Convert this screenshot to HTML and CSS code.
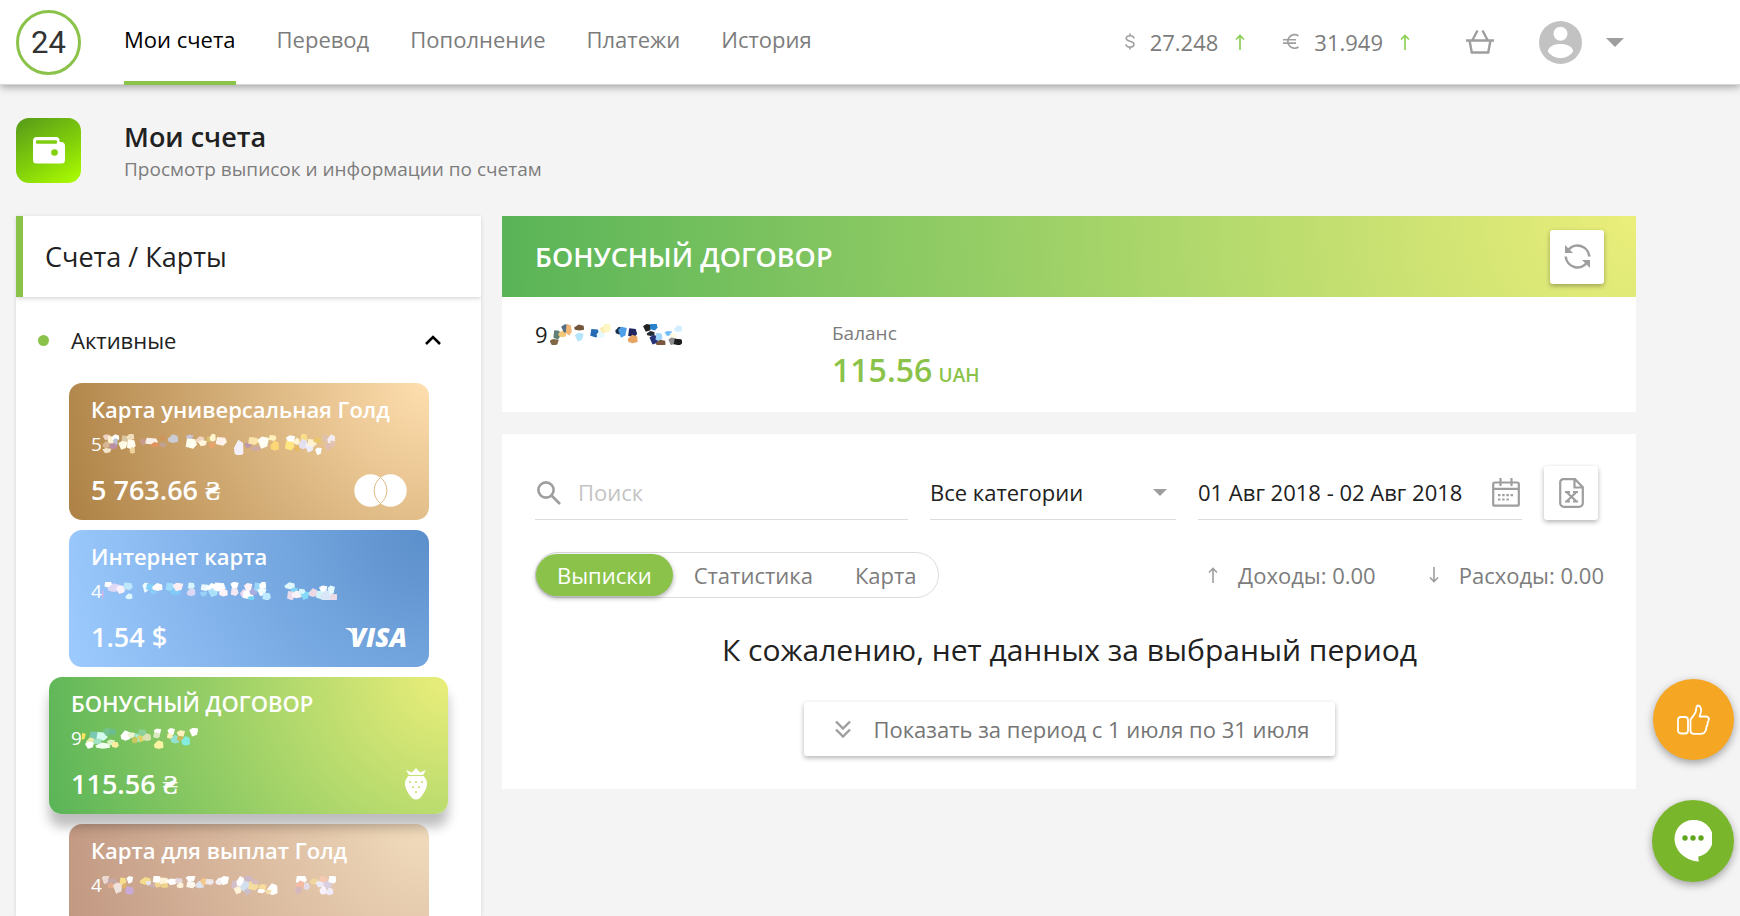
FILE: index.html
```html
<!DOCTYPE html>
<html lang="ru">
<head>
<meta charset="utf-8">
<title>Мои счета</title>
<link rel="stylesheet" href="styles.css">
</head>
<body>
<header class="topbar">
  <a class="logo" href="#">24</a>
  <nav class="nav">
    <a class="nav-link active" href="#">Мои счета</a>
    <a class="nav-link" href="#">Перевод</a>
    <a class="nav-link" href="#">Пополнение</a>
    <a class="nav-link" href="#">Платежи</a>
    <a class="nav-link" href="#">История</a>
  </nav>
  <div class="rates">
    <div class="rate">
      <svg class="cur usd" viewBox="0 0 10 17"><path d="M9 5.6C9 3.8 7.4 2.8 5 2.8S1.200 3.900 1.200 5.500C1.200 9 9 7.400 9 11.300c0 1.700-1.600 2.800-4 2.800S1 13 1 11.200M5 .5v2.300M5 14v2.500"/></svg>
      <span>27.248</span>
      <svg class="arrow up" viewBox="0 0 10 16"><path d="M5 16V1.500M1 5.500l4-4 4 4"/></svg>
    </div>
    <div class="rate">
      <svg class="cur eur" viewBox="0 0 16 17"><path d="M15.500 2.800A6.800 6.800 0 1 0 15.500 14M0 6.700h13M0 10.100h13"/></svg>
      <span>31.949</span>
      <svg class="arrow up" viewBox="0 0 10 16"><path d="M5 16V1.500M1 5.500l4-4 4 4"/></svg>
    </div>
  </div>
  <button class="bare" aria-label="Корзина">
    <svg class="basket" viewBox="0 0 28 24"><path d="M0 10.500h28M3.500 10.500l2.300 12h16.400l2.300-12M6.500 10l5-9.500M21.500 10l-5-9.500"/></svg>
  </button>
  <button class="bare profile" aria-label="Профиль">
    <svg class="avatar" viewBox="0 0 43 43"><circle cx="21.500" cy="21.500" r="21.500" fill="#c2c2c2"/><circle cx="21.500" cy="12.700" r="7" fill="#fff"/><path d="M9 30.500c0-5 6-7.500 12.500-7.500S34 25.500 34 30.500C31.500 34.500 27 37 21.500 37S11.500 34.500 9 30.500z" fill="#fff"/></svg>
    <svg class="caret" viewBox="0 0 18 9"><path d="M0 0h18L9 9z"/></svg>
  </button>
</header>

<main class="page">
  <section class="intro">
    <div class="intro-icon">
      <svg viewBox="0 0 32 27"><path fill="#fff" d="M4 0h19q3.500 0 3.500 3.500V5H28q4 0 4 4v14q0 3.500-3.500 3.500h-25Q0 26.500 0 23V4Q0 0 4 0z"/><rect x="3" y="3.300" width="21" height="3.500" rx="1" fill="#80cc0f"/><circle cx="21.500" cy="15.500" r="3.300" fill="#80d00a"/></svg>
    </div>
    <div>
      <h1>Мои счета</h1>
      <p>Просмотр выписок и информации по счетам</p>
    </div>
  </section>

  <div class="columns">
    <aside class="sidebar">
      <h2>Счета / Карты</h2>
      <button class="group"><i class="dot"></i><span>Активные</span>
        <svg class="chevron" viewBox="0 0 16 10"><path d="M1 9l7-7 7 7"/></svg>
      </button>
      <div class="cards">
        <article class="card gold">
          <h3>Карта универсальная Голд</h3>
          <div class="number">5<svg class="mosaic" data-set="gold"></svg></div>
          <div class="bottom"><span>5 763.66 <b class="hrn">₴</b></span>
            <svg class="rings" viewBox="0 0 53 33"><circle cx="16.500" cy="16.500" r="16.200"/><circle cx="36.500" cy="16.500" r="16.200"/><path d="M26.500 3.500a16.500 16.500 0 0 1 0 26 16.500 16.500 0 0 1 0-26z"/></svg>
          </div>
        </article>
        <article class="card blue">
          <h3>Интернет карта</h3>
          <div class="number">4<svg class="mosaic" data-set="blue"></svg></div>
          <div class="bottom"><span>1.54 $</span><span class="visa">VISA</span></div>
        </article>
        <article class="card bonus selected">
          <h3>БОНУСНЫЙ ДОГОВОР</h3>
          <div class="number">9<svg class="mosaic" data-set="bonus"></svg></div>
          <div class="bottom"><span>115.56 <b class="hrn">₴</b></span>
            <svg class="berry" viewBox="0 0 22 32"><path fill="#fff" d="M1 2l6 2.500L11 0l4 4.500L21 2l-3 5H4zM3.500 8h15Q22 11 22 16c0 5-4 10-6 13q-2 2.500-5 2.500T6 29C4 26 0 21 0 16Q0 11 3.500 8z"/><g fill="#bfdc6e"><circle cx="5" cy="14" r="1"/><circle cx="11" cy="14" r="1"/><circle cx="17" cy="14" r="1"/><circle cx="8" cy="19" r="1"/><circle cx="14" cy="19" r="1"/><circle cx="11" cy="24" r="1"/></g></svg>
          </div>
        </article>
        <article class="card tan">
          <h3>Карта для выплат Голд</h3>
          <div class="number">4<svg class="mosaic" data-set="tan"></svg></div>
          <div class="bottom"></div>
        </article>
      </div>
    </aside>

    <div class="content">
      <section class="account">
        <div class="account-head">
          <h2>БОНУСНЫЙ ДОГОВОР</h2>
          <button class="square" aria-label="Обновить">
            <svg class="refresh" viewBox="0 0 27 27"><path fill="none" stroke="#9e9e9e" stroke-width="2.600" d="M4 7.500A11.800 11.800 0 0 1 25.300 13.500M1.700 13.500A11.800 11.800 0 0 0 23 19.500"/><path fill="#9e9e9e" d="M1 2v8h8zM26 25v-8h-8z"/></svg>
          </button>
        </div>
        <div class="account-body">
          <div class="acc-number">9<svg class="mosaic" data-set="main"></svg></div>
          <div class="balance">
            <div class="label">Баланс</div>
            <div class="sum">115.56 <small>UAH</small></div>
          </div>
        </div>
      </section>

      <section class="panel">
        <form class="filters">
          <label class="field search">
            <svg viewBox="0 0 24 24"><circle cx="9" cy="9" r="7.600"/><path d="M14.500 14.500l8.500 8.500"/></svg>
            <input type="text" placeholder="Поиск" aria-label="Поиск">
          </label>
          <label class="field category">
            <select aria-label="Категория"><option>Все категории</option></select>
            <svg class="caret" viewBox="0 0 14 7"><path d="M0 0h14L7 7z"/></svg>
          </label>
          <label class="field dates">
            <input type="text" value="01 Авг 2018 - 02 Авг 2018" aria-label="Период">
            <svg viewBox="0 0 28 29"><rect x="1.200" y="4.500" width="25.600" height="23.200" rx="1.500"/><path d="M1 10.800h26M8.500 0v8M19.500 0v8"/><path stroke-dasharray="2.400 1.800" d="M6 17.200h16.500M6 21.500h12"/></svg>
          </label>
          <button class="square" type="button" aria-label="Экспорт в Excel">
            <svg class="xls" viewBox="0 0 25 30"><path d="M4 1.200h12l7.800 8V25a3.800 3.800 0 0 1-3.800 3.800H5A3.800 3.800 0 0 1 1.200 25V4.500A3.300 3.300 0 0 1 4 1.200zM15.500 1.500V9.500H23.500M8 14.500l9 8.500M17 14.500L8 23"/><path d="M6 14h5M14 14h5M6 23.500h5M14 23.500h5"/></svg>
          </button>
        </form>

        <div class="toolbar">
          <div class="tabs">
            <button class="tab on">Выписки</button><button class="tab">Статистика</button><button class="tab">Карта</button>
          </div>
          <div class="totals">
            <div class="total"><svg class="arrow" viewBox="0 0 10 16"><path d="M5 16V1.500M1 5.500l4-4 4 4"/></svg><span>Доходы: 0.00</span></div>
            <div class="total"><svg class="arrow" viewBox="0 0 10 16"><path d="M5 0v14.500M1 10.500l4 4 4-4"/></svg><span>Расходы: 0.00</span></div>
          </div>
        </div>

        <p class="empty">К сожалению, нет данных за выбраный период</p>
        <button class="more">
          <svg viewBox="0 0 16 18"><path d="M1 1.500l7 7 7-7M1 9.500l7 7 7-7"/></svg>
          <span>Показать за период с 1 июля по 31 июля</span>
        </button>
      </section>
    </div>
  </div>
</main>

<div class="fabs">
  <button class="fab like" aria-label="Оценить">
    <svg viewBox="0 0 33 31"><g fill="none" stroke="#fff" stroke-width="1.800" stroke-linejoin="round"><rect x="1" y="13" width="10" height="16.500" rx="3"/><path d="M13.500 15.500c3-4 5-6 5.500-9 .3-3 .3-5 1.800-5 3.200.2 3.700 4 3 7l-1.300 4H29c2.500 0 3.500 2 2.500 4l-.8 2-.3 2.500-1 2-.3 2.500-1 2C27.500 29 26 29.800 24 29.800h-7c-2.500 0-3.500-1-3.500-3z"/></g></svg>
  </button>
  <button class="fab chat" aria-label="Чат">
    <svg viewBox="0 0 38 42"><path fill="#fff" d="M19 0a18.500 18.500 0 0 1 5.500 36.500q-.5 2 .5 5C12 41 .5 31 .5 18.500A18.500 18.500 0 0 1 19 0z"/><g fill="#5fa51e"><circle cx="11" cy="18" r="2.700"/><circle cx="19" cy="18" r="2.700"/><circle cx="27" cy="18" r="2.700"/></g></svg>
  </button>
</div>
<script src="app.js"></script>
</body>
</html>
```

FILE: styles.css
```css
* { box-sizing: border-box; }
body {
  margin: 0;
  height: 100vh;
  display: flex;
  flex-direction: column;
  overflow: hidden;
  background: #f4f4f4;
  color: #212121;
  font: 400 22px/30px "Open Sans", "Noto Sans", sans-serif;
}
h1, h2, h3, p { margin: 0; }
svg { display: block; flex: none; }
button, input, select { font: inherit; color: inherit; border: 0; padding: 0; background: none; outline: 0; }
a { color: inherit; text-decoration: none; }

.topbar {
  position: relative;
  display: flex;
  align-items: center;
  height: 85px;
  flex: none;
  padding: 0 116px 0 16px;
  background: #fff;
  border-bottom: 1px solid #d8d8d8;
  box-shadow: 0 2px 8px rgba(0, 0, 0, .35);
}
.logo {
  width: 65px;
  height: 65px;
  border: 3px solid #8bc34a;
  border-radius: 50%;
  font: 400 31px/60px Roboto, sans-serif;
  color: #333;
  text-align: center;
}
.nav { display: flex; gap: 41px; margin-left: 43px; align-self: stretch; margin-bottom: -1px; }
.nav-link { display: flex; align-items: center; padding-bottom: 3px; color: #7c7c7c; border-bottom: 4px solid transparent; }
.nav-link.active { color: #000; border-color: #8bc34a; }
.rates { display: flex; gap: 38px; margin-left: auto; color: #7c7c7c; line-height: 28px; padding-bottom: 1px; }
.rate { display: flex; align-items: center; }
.rate span { margin: 0 17px 0 15px; }
.cur { fill: none; stroke: #9e9e9e; stroke-width: 1.6; height: 17px; }
.usd { width: 10px; }
.eur { width: 16px; }
.arrow { width: 10px; height: 16px; fill: none; stroke: #9e9e9e; stroke-width: 1.6; }
.arrow.up { stroke: #8bcf4f; }
.basket { width: 28px; height: 24px; fill: none; stroke: #9e9e9e; stroke-width: 2.4; }
.bare { margin-left: 56px; cursor: pointer; }
.profile { display: flex; align-items: center; gap: 24px; margin-left: 45px; }
.avatar { width: 43px; height: 43px; }
.caret { width: 18px; height: 9px; fill: #9e9e9e; }

.page { flex: 1; min-height: 0; display: flex; flex-direction: column; padding: 0 104px 0 16px; }
.intro { display: flex; gap: 43px; align-items: flex-start; padding: 33px 0; flex: none; }
.intro-icon {
  width: 65px; height: 65px; border-radius: 13px;
  display: grid; place-items: center;
  background: linear-gradient(150deg, #55991a, #82d00a 55%, #aeff00);
}
.intro-icon svg { width: 32px; height: 27px; }
.intro h1 { font-size: 27px; line-height: 38px; font-weight: 600; }
.intro p { font-size: 19px; line-height: 27px; color: #7c7c7c; }

.columns { flex: 1; min-height: 0; display: grid; grid-template-columns: 465px 1fr; gap: 21px; }
.sidebar { background: #fff; box-shadow: 0 1px 4px rgba(0, 0, 0, .14); min-height: 0; overflow: hidden; }
.sidebar h2 {
  border-left: 7px solid #8bc34a;
  padding: 1px 22px 0;
  font-size: 27px; line-height: 80px; font-weight: 400;
  box-shadow: 0 1px 5px rgba(0, 0, 0, .2);
}
.group { display: flex; align-items: center; width: 100%; height: 86px; padding: 0 40px 0 22px; text-align: left; }
.dot { width: 11px; height: 11px; border-radius: 50%; background: #8bc34a; margin-right: 22px; }
.group span { flex: 1; }
.chevron { width: 16px; height: 10px; fill: none; stroke: #000; stroke-width: 2.6; }
.cards { display: flex; flex-direction: column; gap: 10px; padding: 0 33px; }
.card { height: 137px; flex: none; margin: 0 19px 0 20px; padding: 11px 22px; border-radius: 13px; color: #fff; }
.card h3 { font-size: 22px; line-height: 30px; font-weight: 600; white-space: nowrap; }
.card .number { display: flex; align-items: center; font-size: 19px; line-height: 26px; margin-top: 7px; height: 26px; }
.card .bottom { display: flex; align-items: center; justify-content: space-between; margin-top: 16px; height: 34px; font-size: 27px; line-height: 34px; font-weight: 600; }
.card.selected { position: relative; margin: 0; padding-right: 21px; box-shadow: 0 13px 12px rgba(0, 0, 0, .26); }
.hrn { font-family: "Liberation Serif", serif; }
.gold { background: radial-gradient(circle at 100% 0, #ffdfaf, #ad8145); }
.blue { background: radial-gradient(circle at 100% 0, #5b8fcb, #9dcbff); }
.bonus { background: radial-gradient(circle at 100% 0, #ebee7a, #a0d268 50%, #59b457); }
.tan { background: radial-gradient(circle at 100% 0, #f2dcbd, #c09680); }
.rings { width: 53px; height: 33px; fill: #fff; }
.rings path { stroke: #e0b982; stroke-width: 1; }
.visa { display: flex; align-items: center; font-style: italic; font-size: 26px; font-weight: 800; }
.visa::before { content: ""; width: 9px; height: 18px; margin-right: -4px; background: #fff; clip-path: polygon(0 0, 70% 0, 100% 45%, 60% 18%); }
.berry { width: 22px; height: 32px; }

.content { display: flex; flex-direction: column; gap: 22px; min-width: 0; }
.account, .panel { background: #fff; }
.account-head {
  display: flex; align-items: center; justify-content: space-between;
  height: 81px; padding: 0 32px 0 33px; color: #fff;
  background: radial-gradient(circle at 100% 0, #ebee7a, #a0d268 50%, #59b457);
}
.account-head h2 { font-size: 27px; font-weight: 600; }
.square {
  width: 54px; height: 54px; flex: none; border-radius: 3px; background: #fff;
  display: grid; place-items: center; box-shadow: 0 2px 5px rgba(0, 0, 0, .3);
}
.refresh { width: 27px; height: 27px; }
.account-body { display: flex; padding: 21px 33px; }
.acc-number { display: flex; width: 297px; height: 32px; align-items: center; }
.acc-number .mosaic { margin-left: 2px; }
.balance .label { font-size: 19px; line-height: 30px; color: #7c7c7c; }
.balance .sum { height: 43px; font-size: 32px; line-height: 44px; font-weight: 600; color: #8bc34a; }
.sum small { font-size: 19px; line-height: 20px; margin-left: -2px; }

.panel { padding: 32px 32px 33px 33px; display: flex; flex-direction: column; }
.filters { display: grid; grid-template-columns: 373fr 246fr 324fr 54px; gap: 22px; padding-right: 6px; }
.field { display: flex; align-items: center; height: 54px; border-bottom: 1px solid #dcdcdc; min-width: 0; }
.field input, .field select { flex: 1; width: 0; min-width: 0; height: 40px; padding-bottom: 2px; appearance: none; }
.field input::placeholder { color: #c4c4c4; opacity: 1; }
.search { gap: 17px; padding-left: 2px; }
.search svg { width: 24px; height: 24px; fill: none; stroke: #9e9e9e; stroke-width: 2.6; }
.category { padding-right: 9px; }
.category .caret { width: 14px; height: 7px; }
.dates { padding-right: 2px; }
.dates svg { width: 28px; height: 29px; fill: none; stroke: #9e9e9e; stroke-width: 2.2; }
.xls { width: 25px; height: 30px; fill: none; stroke: #9e9e9e; stroke-width: 2.2; }

.toolbar { display: flex; justify-content: space-between; align-items: center; margin-top: 32px; }
.tabs { display: flex; height: 46px; padding: 1px 0; border: 1px solid #dcdcdc; border-radius: 23px; }
.tab { padding: 0 21px 1px; color: #7c7c7c; border-radius: 21px; }
.tab.on { background: #8bc34a; color: #fff; box-shadow: 0 2px 5px rgba(0, 0, 0, .35); }
.totals { display: flex; gap: 53px; color: #7c7c7c; }
.total { display: flex; align-items: center; gap: 20px; }
.empty { font-size: 30px; line-height: 42px; margin-top: 31px; text-align: center; }
.more {
  align-self: center; display: flex; align-items: center; gap: 22px;
  height: 54px; margin-top: 31px; padding: 0 25px 0 31px; border-radius: 3px;
  color: #757575; font-weight: 500; box-shadow: 0 2px 5px rgba(0, 0, 0, .3);
}
.more svg { width: 16px; height: 18px; fill: none; stroke: #9e9e9e; stroke-width: 2.4; }

.fabs { position: fixed; right: 6px; bottom: 34px; display: flex; flex-direction: column; align-items: flex-end; gap: 40px; }
.fab { width: 81px; height: 81px; border-radius: 50%; display: grid; place-items: center; box-shadow: 0 3px 8px rgba(0, 0, 0, .35); }
.like { background: #f5a623; }
.like svg { width: 33px; height: 31px; }
.chat { width: 82px; height: 82px; background: #7ab62b; }
.chat svg { width: 38px; height: 42px; }
```

FILE: app.js
```js
// Masks over the hidden account digits: each piece is [x, y, width, height, colour].
const masks = {
  gold: { size: [233, 21], box: [303, 404, 699, 63], pieces: [
    [316,414,18,14,'#ecd3c4'],[330,423,16,20,'#fff3d0'],[343,414,18,14,'#fff'],[343,430,12,20,'#b9bfd4'],[337,441,18,14,'#b98fa8'],[315,436,16,16,'#d8b894'],[317,454,22,12,'#f3e4cc'],
    [375,425,22,26,'#d8c8a0'],[388,412,18,16,'#f0dfbd'],[365,438,22,20,'#fffbe4'],[391,436,20,24,'#fffdf0'],[394,453,12,16,'#ecd49a'],
    [427,428,20,16,'#c79b8a'],[452,426,30,16,'#f9efe6'],[461,436,20,12,'#e0915c'],[484,416,18,12,'#cf9459'],[486,437,18,10,'#bfa294'],[516,418,24,20,'#c9ccd5'],
    [565,416,18,16,'#c8c2d2'],[571,433,26,24,'#fffff0'],[597,421,20,16,'#f2d6c4'],[604,432,22,14,'#fff7dc'],[625,420,14,14,'#d9bd6e'],[635,414,14,20,'#fff5cf'],[633,438,18,14,'#e7a46b'],[661,426,26,20,'#fff2e8'],
    [713,446,22,38,'#f3effa'],[741,438,20,14,'#bd99a6'],[757,425,24,18,'#fbe5aa'],[764,447,22,12,'#cdaaa5'],[786,430,28,28,'#fffef4'],[815,416,18,14,'#fff0be'],[821,439,20,24,'#fbd778'],
    [868,422,22,22,'#fff'],[866,439,22,22,'#ffe681'],[887,426,14,16,'#fff5d0'],[887,448,14,14,'#e8b85e'],[909,416,16,24,'#f8dd8a'],[906,434,20,24,'#e3e1ef'],[925,444,22,24,'#eeedfb'],[933,431,22,18,'#fff3d1'],[948,422,18,14,'#eac76c'],[952,456,16,18,'#fff'],[974,418,18,18,'#ddc1ad'],[991,420,18,24,'#f3edf3'],[981,442,18,18,'#dfbfb2'],[995,434,12,16,'#e5c3b1']] },
  blue: { size: [235, 18], box: [303, 846, 705, 54], pieces: [
    [302,886,10,24,'#d3b5ed'],[322,853,18,16,'#fff'],[339,863,30,20,'#dfd8f5'],[359,869,24,20,'#f9f2fb'],[381,859,22,18,'#bfe7fb'],[384,889,16,14,'#dff7ff'],
    [434,863,16,24,'#effaff'],[448,862,20,16,'#82d0fa'],[469,861,24,18,'#fffdfb'],[457,877,18,10,'#8bcdf8'],[507,861,20,20,'#9fdbfb'],[523,874,26,18,'#81caf7'],[530,861,26,20,'#fceef2'],
    [571,858,16,16,'#d5f5ff'],[570,876,20,20,'#d9d7f3'],[607,882,18,12,'#97d3f7'],[612,863,20,16,'#eaf9ff'],[632,861,22,18,'#fff'],[636,878,26,20,'#aae1fa'],[656,862,28,22,'#fff'],[667,878,20,18,'#fff4fa'],
    [700,857,20,18,'#fff'],[701,876,18,18,'#f4e9f3'],[728,879,16,18,'#ebd8f0'],[741,863,20,22,'#fff2f7'],[741,885,26,20,'#fff'],[757,874,18,18,'#a9ace0'],[750,895,18,10,'#74d5f3'],[771,862,18,22,'#9bd7f8'],[785,855,16,18,'#fff'],[782,876,22,20,'#effbff'],[797,890,20,18,'#bdeaff'],
    [866,857,24,16,'#dff7fc'],[879,873,18,16,'#82d5f7'],[870,887,18,22,'#eadbec'],[887,883,24,18,'#f9f3f8'],[911,887,22,20,'#83d9f7'],[903,874,16,12,'#d9f6fc'],[936,878,20,20,'#ebd9e5'],[966,868,20,18,'#fff'],[958,885,20,20,'#d1f3fa'],[976,887,28,26,'#d8e6f8'],[990,871,18,22,'#e3f9ff'],[1000,892,20,16,'#eed9e7']] },
  bonus: { size: [116, 21], box: [240, 358, 348, 62], pieces: [
    [242,383,14,16,'#ffe65c'],[278,380,24,18,'#79c8b3'],[265,397,20,18,'#e9eda9'],[262,409,22,16,'#fff'],[300,383,26,20,'#d4fbef'],[285,397,20,14,'#a2e3c6'],[317,370,26,18,'#75c28e'],[332,370,18,14,'#6bbd90'],[302,410,34,14,'#efffee'],[326,401,20,14,'#d8f1bf'],[340,408,16,14,'#ffed9e'],
    [370,380,22,24,'#fff'],[387,380,20,14,'#e9f5d2'],[407,387,14,20,'#9feedc'],[398,393,14,16,'#cbc75f'],[417,388,18,20,'#ddd46a'],[421,372,20,16,'#8dd09a'],[434,385,20,18,'#dce3b0'],
    [466,370,18,16,'#fff'],[464,380,16,14,'#dceabf'],[470,407,22,20,'#faf3a3'],[507,370,18,18,'#fff'],[504,382,14,12,'#fff2bd'],[519,391,20,20,'#91e4d3'],[536,376,20,18,'#fff0bf'],[535,389,16,12,'#c4bb5b'],[551,396,20,22,'#82ecdf'],[575,370,22,20,'#fff']] },
  tan: { size: [234, 19], box: [303, 802, 702, 58], pieces: [
    [313,813,18,22,'#ead8d0'],[334,823,24,20,'#c5a9a9'],[330,831,16,14,'#e3ac8b'],[350,839,24,26,'#f0e2dc'],[366,818,16,18,'#f5dd8d'],[369,832,12,12,'#ddb26a'],[386,814,16,18,'#fff'],[386,847,20,20,'#c9a9d7'],
    [433,817,26,18,'#f3dc8c'],[442,824,14,12,'#e7e2f0'],[468,813,20,18,'#fff'],[456,831,16,12,'#cbafae'],[470,830,18,12,'#f0d58e'],[489,818,22,18,'#fff3d9'],[490,831,18,12,'#eed38c'],[513,820,28,16,'#fff'],[534,817,18,14,'#e5d7de'],[537,830,16,14,'#fff4db'],
    [568,811,24,16,'#fff'],[570,829,22,16,'#fff8ee'],[596,828,20,18,'#dfe2ef'],[609,820,20,18,'#f3c98b'],[626,820,20,14,'#eee7ea'],[655,818,18,18,'#f4f0f4'],[670,816,22,22,'#fff'],
    [704,830,20,22,'#d5bfc9'],[718,819,18,26,'#fff'],[710,846,20,18,'#fff3d9'],[742,813,22,18,'#ceb8c5'],[732,833,22,26,'#d2e0ed'],[739,850,16,16,'#ccbfcd'],[757,832,24,22,'#f5dda0'],[762,819,16,14,'#d7bdbb'],[784,838,20,18,'#f8dd9a'],[781,848,18,10,'#fff'],[814,842,24,28,'#fff'],[801,851,16,12,'#f4deaa'],
    [901,813,26,20,'#fff'],[898,829,20,20,'#f4baa2'],[892,846,18,18,'#d4b8bd'],[917,834,14,18,'#e2dce9'],[939,818,20,16,'#eed69d'],[957,827,24,16,'#eceaf7'],[967,812,20,16,'#f6c9b3'],[966,845,16,22,'#f8f1fb'],[980,829,24,18,'#d9cfe1'],[995,813,20,18,'#fff'],[985,849,18,18,'#efebf8']] },
  main: { size: [132, 21], box: [630, 72, 345, 64], pieces: [
    [640,128,20,16,'#816746'],[648,105,14,22,'#5f8175'],[662,102,16,16,'#f4c777'],[671,86,20,20,'#526d84'],[679,90,12,26,'#f1b575'],[706,83,20,14,'#735639'],[706,112,18,20,'#b2e4fb'],
    [747,100,18,20,'#246bb4'],[762,103,16,18,'#e6faff'],[770,90,16,16,'#ffe9aa'],[779,84,16,22,'#fff7c3'],[811,92,16,18,'#152d45'],[819,97,18,26,'#4e9eea'],[846,99,18,22,'#20245f'],[846,118,20,20,'#e8a562'],
    [884,84,18,18,'#20201f'],[901,80,16,18,'#2781cc'],[893,101,16,12,'#232c36'],[902,120,20,22,'#253478'],[915,112,14,20,'#a0d6fb'],[919,129,20,14,'#79563d'],[939,101,16,12,'#72bdf8'],[952,108,14,14,'#fffbe4'],[965,86,16,16,'#d3efff'],[949,125,16,18,'#8c8c8c'],[965,127,18,16,'#1d1d1d']] }
};
const corners = [
  [[-.6, -.3], [-.1, -.65], [.65, -.5], [.45, .4], [-.2, .65]],
  [[-.5, -.65], [.45, -.55], [.65, .15], [.2, .65], [-.65, .4]],
  [[-.65, 0], [-.05, -.65], [.6, -.4], [.65, .45], [0, .65], [-.55, .45]]
];
document.querySelectorAll('.mosaic').forEach(svg => {
  const { size, box, pieces } = masks[svg.dataset.set];
  svg.setAttribute('viewBox', box.join(' '));
  svg.setAttribute('preserveAspectRatio', 'none');
  svg.setAttribute('width', size[0]);
  svg.setAttribute('height', size[1]);
  svg.innerHTML = pieces.map(([x, y, w, h, c], i) =>
    `<polygon fill="${c}" points="${corners[i % 3].map(p => (x + p[0] * w) + ',' + (y + p[1] * h)).join(' ')}"/>`).join('');
});
```
